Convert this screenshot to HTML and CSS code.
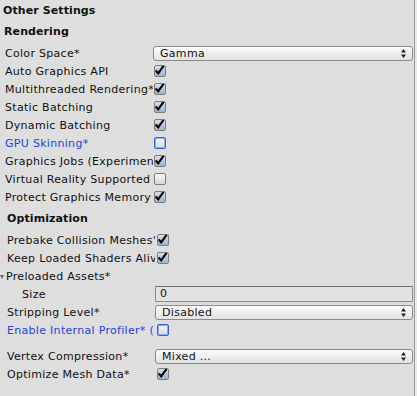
FILE: index.html
```html
<!DOCTYPE html>
<html lang="en">
<head>
    <meta charset="UTF-8">
    <meta name="viewport" content="width=device-width, initial-scale=1.0">
    <title>Other Settings</title>
    <link rel="stylesheet" href="styles.css">
</head>
<body>

    <div class="inspector">
        <div class="title">Other Settings</div>

        <!-- Rendering -->
        <div class="group rendering">
            <div class="heading">Rendering</div>

            <div class="row">
                <span class="label">Color Space*</span>
                <div class="popup"><span>Gamma</span><i class="arrows"></i></div>
            </div>
            <div class="row">
                <span class="label">Auto Graphics API</span>
                <span class="check on"></span>
            </div>
            <div class="row">
                <span class="label">Multithreaded Rendering*</span>
                <span class="check on"></span>
            </div>
            <div class="row">
                <span class="label">Static Batching</span>
                <span class="check on"></span>
            </div>
            <div class="row">
                <span class="label">Dynamic Batching</span>
                <span class="check on"></span>
            </div>
            <div class="row">
                <span class="label changed">GPU Skinning*</span>
                <span class="check focus"></span>
            </div>
            <div class="row">
                <span class="label">Graphics Jobs (Experimen</span>
                <span class="check on"></span>
            </div>
            <div class="row">
                <span class="label">Virtual Reality Supported</span>
                <span class="check"></span>
            </div>
            <div class="row">
                <span class="label">Protect Graphics Memory</span>
                <span class="check on"></span>
            </div>
        </div>

        <!-- Optimization -->
        <div class="group optimization">
            <div class="heading">Optimization</div>

            <div class="row">
                <span class="label">Prebake Collision Meshes'</span>
                <span class="check on"></span>
            </div>
            <div class="row">
                <span class="label">Keep Loaded Shaders Aliv</span>
                <span class="check on"></span>
            </div>
            <div class="row">
                <span class="label foldout"><i class="fold"></i>Preloaded Assets*</span>
            </div>
            <div class="row">
                <span class="label sub">Size</span>
                <div class="field">0</div>
            </div>
            <div class="row">
                <span class="label">Stripping Level*</span>
                <div class="popup"><span>Disabled</span><i class="arrows"></i></div>
            </div>
            <div class="row">
                <span class="label changed">Enable Internal Profiler* (</span>
                <span class="check focus"></span>
            </div>

            <div class="row spaced">
                <span class="label">Vertex Compression*</span>
                <div class="popup"><span>Mixed ...</span><i class="arrows"></i></div>
            </div>
            <div class="row">
                <span class="label">Optimize Mesh Data*</span>
                <span class="check on"></span>
            </div>
        </div>
    </div>

</body>
</html>
```

FILE: styles.css
```css
/* General Styles */
body {
    margin: 0;
    background-color: #e9e9e9;
    font-family: "DejaVu Sans", Verdana, sans-serif;
    font-size: 11px;
    letter-spacing: 0.3px;
    color: #111;
}

.inspector {
    box-sizing: border-box;
    width: 415px;
    height: 396px;
    padding: 2px 1px 0 0;
    background-color: #dedede;
    border-right: 1px solid #9a9a9a;
}

.title, .heading {
    font-weight: bold;
    line-height: 18px;
    letter-spacing: 0.1px;
}

.title {
    padding-left: 3px;
}

.heading {
    margin-bottom: 3px;
}

.rendering {
    margin-top: 3px;
    padding-left: 4px;
}

.rendering .row {
    margin-left: 1px;
}

.optimization {
    margin-top: 4px;
    padding-left: 7px;
}

.row {
    display: grid;
    grid-template-columns: 148px 1fr;
    align-items: center;
    height: 18px;
}

.row.spaced {
    margin-top: 8px;
}

.label {
    white-space: nowrap;
    overflow: hidden;
}

.label.changed {
    color: #1c44dc;
}

.label.sub {
    padding-left: 15px;
}

.label.foldout {
    margin-left: -7px;
    overflow: visible;
}

.fold {
    display: inline-block;
    width: 0;
    height: 0;
    margin: 0 2px 1px 0;
    border-left: 2.5px solid transparent;
    border-right: 2.5px solid transparent;
    border-top: 4px solid #666;
}

/* Checkboxes */
.check {
    box-sizing: border-box;
    width: 12px;
    height: 12px;
    margin-left: 1px;
    border: 1px solid #7c7c7c;
    border-radius: 2px;
    background: linear-gradient(#fbfbfb, #d6d6d6);
}

.optimization .check {
    margin-left: 2px;
}

.check.on {
    background:
        url("data:image/svg+xml,%3Csvg xmlns='http://www.w3.org/2000/svg' width='12' height='12'%3E%3Cpath d='M1.6 5.4 L4.2 8.3 L9.6 0.8' fill='none' stroke='%23000' stroke-width='2.2'/%3E%3C/svg%3E") -1px -1px no-repeat,
        linear-gradient(#d4e0ee, #9db3cf);
}

.check.focus {
    border: 1px solid #2f62e6;
    box-shadow: inset 0 0 0 1px #8ea9ee;
    background: linear-gradient(#f6f6f6, #d9d9d9);
}

/* Popups and fields */
.popup {
    box-sizing: border-box;
    display: flex;
    align-items: center;
    justify-content: space-between;
    height: 15px;
    padding: 0 6px 0 6px;
    border: 1px solid #8a8a8a;
    border-radius: 3px;
    background: linear-gradient(#fcfcfc, #e2e2e2);
    line-height: 13px;
}

.arrows {
    width: 5px;
    height: 9px;
    background: url("data:image/svg+xml,%3Csvg xmlns='http://www.w3.org/2000/svg' width='5' height='9'%3E%3Cpath d='M2.5 0 L5 3.5 L0 3.5Z M0 5.5 L5 5.5 L2.5 9Z' fill='%23222'/%3E%3C/svg%3E") no-repeat;
}

.field {
    box-sizing: border-box;
    height: 16px;
    padding-left: 4px;
    border: 1px solid #8c8c8c;
    border-top-color: #6f6f6f;
    border-radius: 1px;
    background-color: #e2e2e2;
    line-height: 14px;
}
```
